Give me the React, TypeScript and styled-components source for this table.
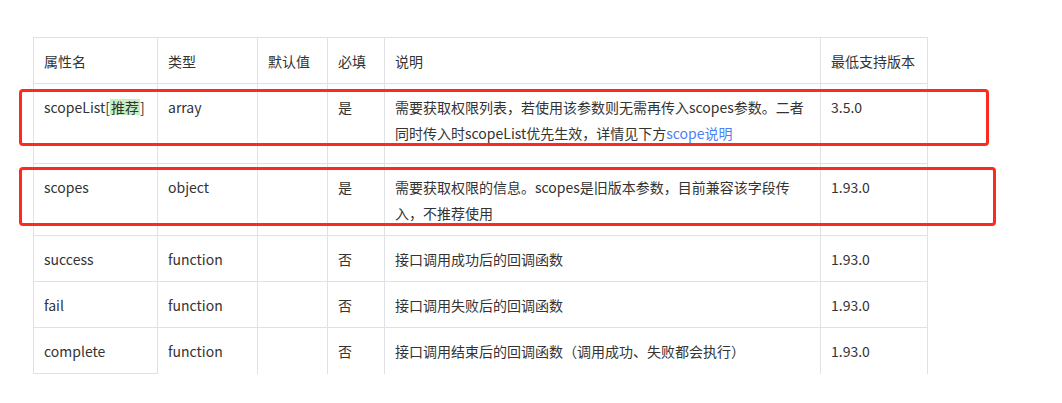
import React from "react";
import styled, { createGlobalStyle } from "styled-components";

const Global = createGlobalStyle`
  html, body { margin: 0; padding: 0; background: #fff; }
  body { font-family: "Noto Sans CJK SC", "Noto Sans", sans-serif; color: #333; }
`;

const Page = styled.div`
  position: relative;
  padding: 37px 0 0 33px;
  width: 1062px;
  height: 403px;
  box-sizing: border-box;
  overflow: hidden;
`;

const Table = styled.table`
  border-collapse: collapse;
  table-layout: fixed;
  width: 895px;
  font-size: 14px;
  line-height: 26px;
  color: #333;
`;

const Col = styled.col<{ $w: number }>`
  width: ${(p) => p.$w}px;
`;

const Th = styled.th`
  border: 1px solid #dfe1e6;
  padding: 10px 10px 9px 10px;
  text-align: left;
  font-weight: 400;
  vertical-align: top;
`;

const Td = styled.td<{ $extra?: boolean; $open?: boolean }>`
  border: 1px solid #dfe1e6;
  ${(p) => (p.$open ? "border-bottom: none;" : "")}
  padding: 10px 10px ${(p) => (p.$extra ? 17 : 9)}px 10px;
  vertical-align: top;
  word-break: break-all;
`;

const Mark = styled.span`
  display: inline-block;
  background: #c6efc1;
  line-height: 16px;
  padding: 0 1px;
`;

const Link = styled.a`
  color: #4d7ff5;
  text-decoration: none;
`;

const Callout = styled.div<{ $l: number; $t: number; $w: number; $h: number }>`
  position: absolute;
  left: ${(p) => p.$l}px;
  top: ${(p) => p.$t}px;
  width: ${(p) => p.$w}px;
  height: ${(p) => p.$h}px;
  box-sizing: border-box;
  border: 3px solid #fb2b1f;
  border-radius: 4px;
  pointer-events: none;
`;

type Row = {
  name: React.ReactNode;
  type: string;
  req: string;
  desc: React.ReactNode;
  ver: string;
  extra?: boolean;
};

const rows: Row[] = [
  {
    name: (
      <>
        scopeList[<Mark>推荐</Mark>]
      </>
    ),
    type: "array",
    req: "是",
    desc: (
      <>
        需要获取权限列表，若使用该参数则无需再传入scopes参数。二者同时传入时scopeList优先生效，详情见下方
        <Link href="#">scope说明</Link>
      </>
    ),
    ver: "3.5.0",
    extra: true,
  },
  {
    name: "scopes",
    type: "object",
    req: "是",
    desc: "需要获取权限的信息。scopes是旧版本参数，目前兼容该字段传入，不推荐使用",
    ver: "1.93.0",
  },
  { name: "success", type: "function", req: "否", desc: "接口调用成功后的回调函数", ver: "1.93.0" },
  { name: "fail", type: "function", req: "否", desc: "接口调用失败后的回调函数", ver: "1.93.0" },
  {
    name: "complete",
    type: "function",
    req: "否",
    desc: "接口调用结束后的回调函数（调用成功、失败都会执行）",
    ver: "1.93.0",
  },
];

export default function App() {
  return (
    <Page>
      <Global />
      <Table>
        <colgroup>
          <Col $w={124} />
          <Col $w={100} />
          <Col $w={70} />
          <Col $w={57} />
          <Col $w={436} />
          <Col $w={107} />
        </colgroup>
        <thead>
          <tr>
            <Th>属性名</Th>
            <Th>类型</Th>
            <Th>默认值</Th>
            <Th>必填</Th>
            <Th>说明</Th>
            <Th>最低支持版本</Th>
          </tr>
        </thead>
        <tbody>
          {rows.map((r, i) => {
            const last = i === rows.length - 1;
            return (
              <tr key={i}>
                <Td $extra={r.extra}>{r.name}</Td>
                <Td $extra={r.extra} $open={last}>{r.type}</Td>
                <Td $extra={r.extra} $open={last}></Td>
                <Td $extra={r.extra} $open={last}>{r.req}</Td>
                <Td $extra={r.extra} $open={last}>{r.desc}</Td>
                <Td $extra={r.extra} $open={last}>{r.ver}</Td>
              </tr>
            );
          })}
        </tbody>
      </Table>
      <Callout $l={19} $t={89} $w={970} $h={57} />
      <Callout $l={19} $t={167} $w={977} $h={59} />
    </Page>
  );
}
